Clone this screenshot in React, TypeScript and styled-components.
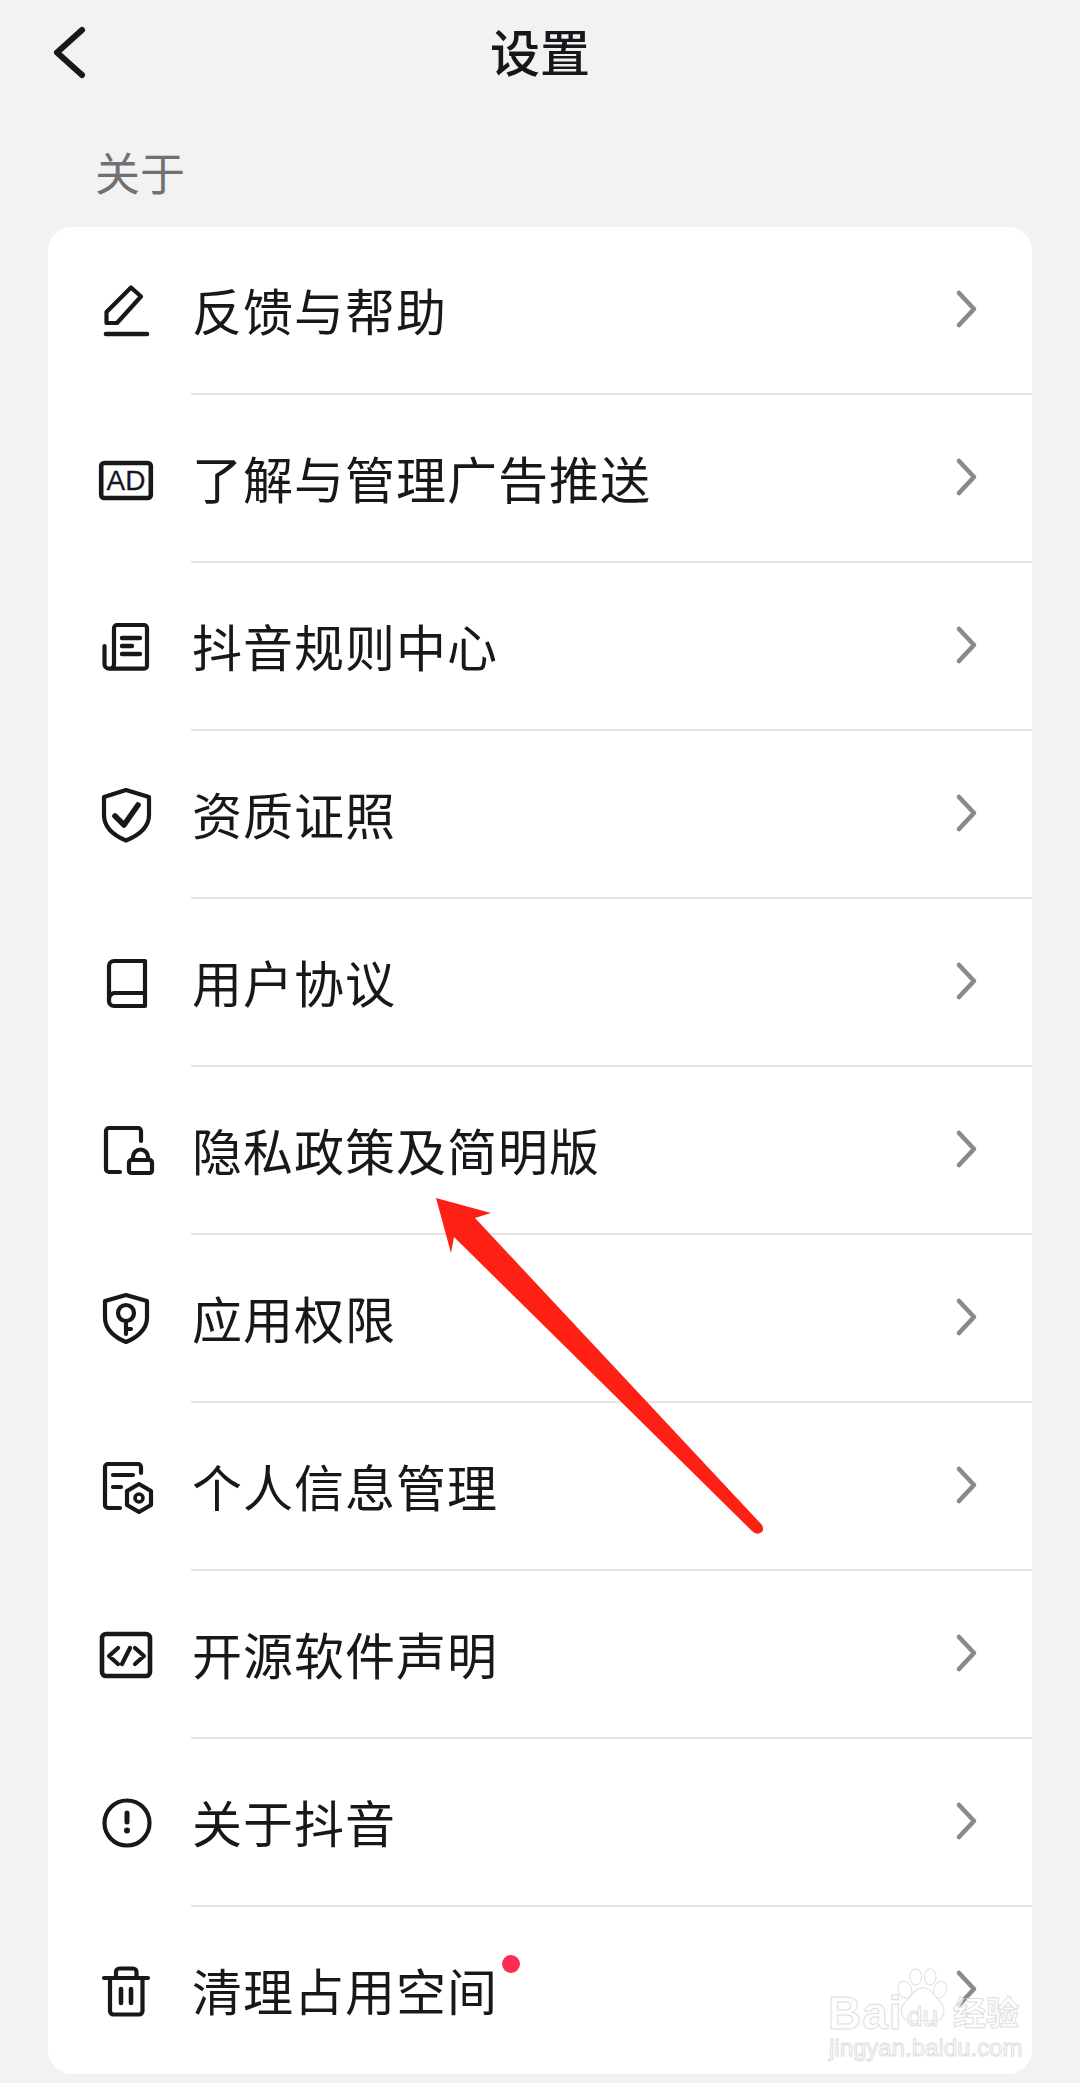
import React from 'react'
import styled, { createGlobalStyle } from 'styled-components'

const GlobalStyle = createGlobalStyle`
  html, body {
    margin: 0;
    padding: 0;
    background: #f2f2f3;
  }
  body {
    font-family: "Noto Sans CJK SC", "Liberation Sans", sans-serif;
  }
`

const Page = styled.div`
  position: relative;
  width: 1080px;
  height: 2083px;
  overflow: hidden;
  background: #f2f2f3;
  color: #18181c;
`

const Header = styled.header`
  height: 100px;
  display: flex;
  align-items: center;
  justify-content: center;
`

const BackIcon = styled.svg`
  position: absolute;
  left: 40px;
  top: 15px;
  width: 60px;
  height: 80px;
`

const Title = styled.h1`
  margin: 0;
  font-size: 50px;
  font-weight: 500;
  line-height: 1;
`

const SectionLabel = styled.div`
  height: 127px;
  padding-left: 95px;
  box-sizing: border-box;
  font-size: 45px;
  line-height: 144px;
  color: #717175;
`

const Card = styled.ul`
  list-style: none;
  margin: 0 0 0 48px;
  padding: 0;
  width: 984px;
  background: #fff;
  border-radius: 24px;
  overflow: hidden;
`

const RowBody = styled.div`
  flex: 1;
  height: 100%;
  margin-left: 35px;
  padding-bottom: 2px;
  box-sizing: border-box;
  display: flex;
  align-items: center;
  justify-content: space-between;
  border-bottom: 2px solid #e6e6e8;
`

const Row = styled.li`
  height: 168px;
  display: flex;
  align-items: center;
  padding-left: 48px;
  &:last-child {
    height: 167px;
  }
  &:last-child ${RowBody} {
    border-bottom: 0;
    padding-bottom: 4px;
  }
`

const IconBox = styled.svg`
  width: 60px;
  height: 60px;
  flex: none;
  fill: none;
  stroke: #18181c;
  stroke-width: 4.2;
  stroke-linecap: round;
  stroke-linejoin: round;
`

const Label = styled.span`
  position: relative;
  margin-left: 1px;
  font-size: 50px;
  line-height: 1;
  letter-spacing: 1px;
`

const Badge = styled.i`
  position: absolute;
  right: -22px;
  top: -9px;
  width: 18px;
  height: 18px;
  border-radius: 50%;
  background: #fe2c55;
`

const Chevron = styled.svg`
  width: 24px;
  height: 40px;
  margin-right: 54px;
  flex: none;
  fill: none;
  stroke: #8a8a8e;
  stroke-width: 4.6;
  stroke-linecap: round;
  stroke-linejoin: round;
`

const ArrowOverlay = styled.svg`
  position: absolute;
  left: 0;
  top: 0;
  width: 1080px;
  height: 2083px;
  pointer-events: none;
`

const Watermark = styled.div`
  position: absolute;
  left: 826px;
  top: 1962px;
  width: 200px;
  height: 104px;
  pointer-events: none;
  color: rgba(255, 255, 255, 0.75);
  -webkit-text-stroke: 1px #dedede;
`

const WmBai = styled.span`
  position: absolute;
  left: 2px;
  top: 28px;
  font: 700 46px/46px "Liberation Sans", sans-serif;
  letter-spacing: 1px;
`

const WmCn = styled.span`
  position: absolute;
  left: 127px;
  top: 30px;
  font: 700 33px/38px "Noto Sans CJK SC", sans-serif;
`

const WmDu = styled.span`
  position: absolute;
  left: 81px;
  top: 41px;
  font: 400 28px/28px "Liberation Sans", sans-serif;
`

const WmUrl = styled.span`
  position: absolute;
  left: 3px;
  top: 72px;
  font: 400 24px/28px "Liberation Sans", sans-serif;
  white-space: nowrap;
`

const PawIcon = styled.svg`
  position: absolute;
  left: 66px;
  top: 6px;
  width: 60px;
  height: 56px;
  fill: rgba(255, 255, 255, 0.75);
  stroke: #e2e2e2;
  stroke-width: 1.2;
`

const AdText = styled.text`
  font: 400 28px "Liberation Sans", sans-serif;
  fill: #18181c;
  stroke: #18181c;
  stroke-width: 0.3;
`

const icons: Record<string, React.ReactNode> = {
  pen: (
    <>
      <path d="M35 6.5 L45 15.5 L21 42 L10.5 42 L10.5 31 Z" />
      <path d="M10 53 H51" strokeWidth={4.6} />
    </>
  ),
  ad: (
    <>
      <rect x="5.2" y="14" width="49.6" height="35" rx="3" strokeWidth={4.6} />
      <AdText x="30" y="41" textAnchor="middle">AD</AdText>
    </>
  ),
  doc: (
    <>
      <path d="M8.5 29 V47 a4.7 4.7 0 0 0 4.7 4.7 H48 a3 3 0 0 0 3 -3 V11 a3 3 0 0 0 -3 -3 H21 a3 3 0 0 0 -3 3 V47 a4.7 4.7 0 0 1 -4.7 4.7" />
      <path d="M26 21 H44 M26 29 H36 M26 37 H44" strokeWidth={4.4} />
    </>
  ),
  check: (
    <>
      <path d="M30 5 L53 12 V30 C53 43 41 51 30 55.5 C19 51 8 43 8 30 V12 Z" />
      <path d="M19 31 L28 40 L42 20" strokeWidth={5.6} />
    </>
  ),
  book: (
    <>
      <path d="M49 8 H18 a5 5 0 0 0 -5 5 V48 a5 5 0 0 0 5 5 H49 Z" />
      <path d="M49 40 H18 a6.5 6.5 0 0 0 -5 6" />
    </>
  ),
  lock: (
    <>
      <path d="M45 20 V10 a3 3 0 0 0 -3 -3 H13 a3 3 0 0 0 -3 3 V48 a3 3 0 0 0 3 3 H24" />
      <rect x="33" y="39" width="23" height="13" rx="2.5" />
      <path d="M37 38 V36 a7.5 7.5 0 0 1 15 0 V38" />
    </>
  ),
  key: (
    <>
      <path d="M30 6 L51 12 V29 C51 41 40 49 30 53 C20 49 9 41 9 29 V12 Z" />
      <circle cx="30" cy="24" r="8" />
      <path d="M30 32 V45 M30 40 H35" />
    </>
  ),
  hex: (
    <>
      <path d="M45 16 V10 a3 3 0 0 0 -3 -3 H12 a3 3 0 0 0 -3 3 V48 a3 3 0 0 0 3 3 H24" />
      <path d="M17 18 H37 M17 30 H25" />
      <path d="M43 27 L55 34 V48 L43 55 L31 48 V34 Z" />
      <circle cx="43" cy="41" r="4" strokeWidth={3.6} />
    </>
  ),
  code: (
    <>
      <rect x="6" y="9" width="48" height="42" rx="4" strokeWidth={4.6} />
      <path d="M22 23 L13 31 L22 39 M34 23 L26 39 M39 23 L48 31 L39 39" />
    </>
  ),
  alert: (
    <>
      <circle cx="31" cy="30" r="22.5" />
      <path d="M31 20 V29" strokeWidth={5} />
      <circle cx="31" cy="37.5" r="3" fill="#18181c" stroke="none" />
    </>
  ),
  trash: (
    <>
      <path d="M8 17 H52" />
      <path d="M20 16 V11 a3.5 3.5 0 0 1 3.5 -3.5 H37 a3.5 3.5 0 0 1 3.5 3.5 V16" />
      <path d="M14 17 V50 a3.5 3.5 0 0 0 3.5 3.5 H43 a3.5 3.5 0 0 0 3.5 -3.5 V17" />
      <path d="M25 28 V42 M35 28 V42" strokeWidth={4.6} />
    </>
  ),
}

const items = [
  { icon: 'pen', label: '反馈与帮助' },
  { icon: 'ad', label: '了解与管理广告推送' },
  { icon: 'doc', label: '抖音规则中心' },
  { icon: 'check', label: '资质证照' },
  { icon: 'book', label: '用户协议' },
  { icon: 'lock', label: '隐私政策及简明版' },
  { icon: 'key', label: '应用权限' },
  { icon: 'hex', label: '个人信息管理' },
  { icon: 'code', label: '开源软件声明' },
  { icon: 'alert', label: '关于抖音' },
  { icon: 'trash', label: '清理占用空间', dot: true },
]

function App() {
  return (
    <Page>
      <GlobalStyle />
      <Header>
        <BackIcon viewBox="0 0 60 80" fill="none" stroke="#18181c" strokeWidth="6" strokeLinecap="round" strokeLinejoin="round">
          <path d="M42 15 L17 37.5 L42 60" />
        </BackIcon>
        <Title>设置</Title>
      </Header>
      <SectionLabel>关于</SectionLabel>
      <Card>
        {items.map(item => (
          <Row key={item.icon}>
            <IconBox viewBox="0 0 60 60">{icons[item.icon]}</IconBox>
            <RowBody>
              <Label>
                {item.label}
                {item.dot && <Badge />}
              </Label>
              <Chevron viewBox="0 0 24 40">
                <path d="M5 4 L20 20 L5 36" />
              </Chevron>
            </RowBody>
          </Row>
        ))}
      </Card>
      <ArrowOverlay viewBox="0 0 1080 2083">
        <path
          d="M436 1198 L491 1213 L475 1218 L762 1525 Q765 1531 760 1533 Q756 1535 752 1531 L454 1237 L451 1253 Z"
          fill="#fe2015"
        />
      </ArrowOverlay>
      <Watermark>
        <PawIcon viewBox="0 0 60 62">
          <ellipse cx="11" cy="24" rx="7.5" ry="9.5" transform="rotate(-20 11 24)" />
          <ellipse cx="23" cy="10" rx="6.5" ry="9" />
          <ellipse cx="39" cy="10" rx="6.5" ry="9" />
          <ellipse cx="50" cy="24" rx="7" ry="9.5" transform="rotate(20 50 24)" />
          <path d="M31 22 C40 22 43 30 50 37 C58 46 54 60 42 59 C35 58 27 58 20 59 C8 60 3 46 11 38 C19 31 22 22 31 22 Z" />
        </PawIcon>
        <WmBai>Bai</WmBai>
        <WmDu>du</WmDu>
        <WmCn>经验</WmCn>
        <WmUrl>jingyan.baidu.com</WmUrl>
      </Watermark>
    </Page>
  )
}

export default App
